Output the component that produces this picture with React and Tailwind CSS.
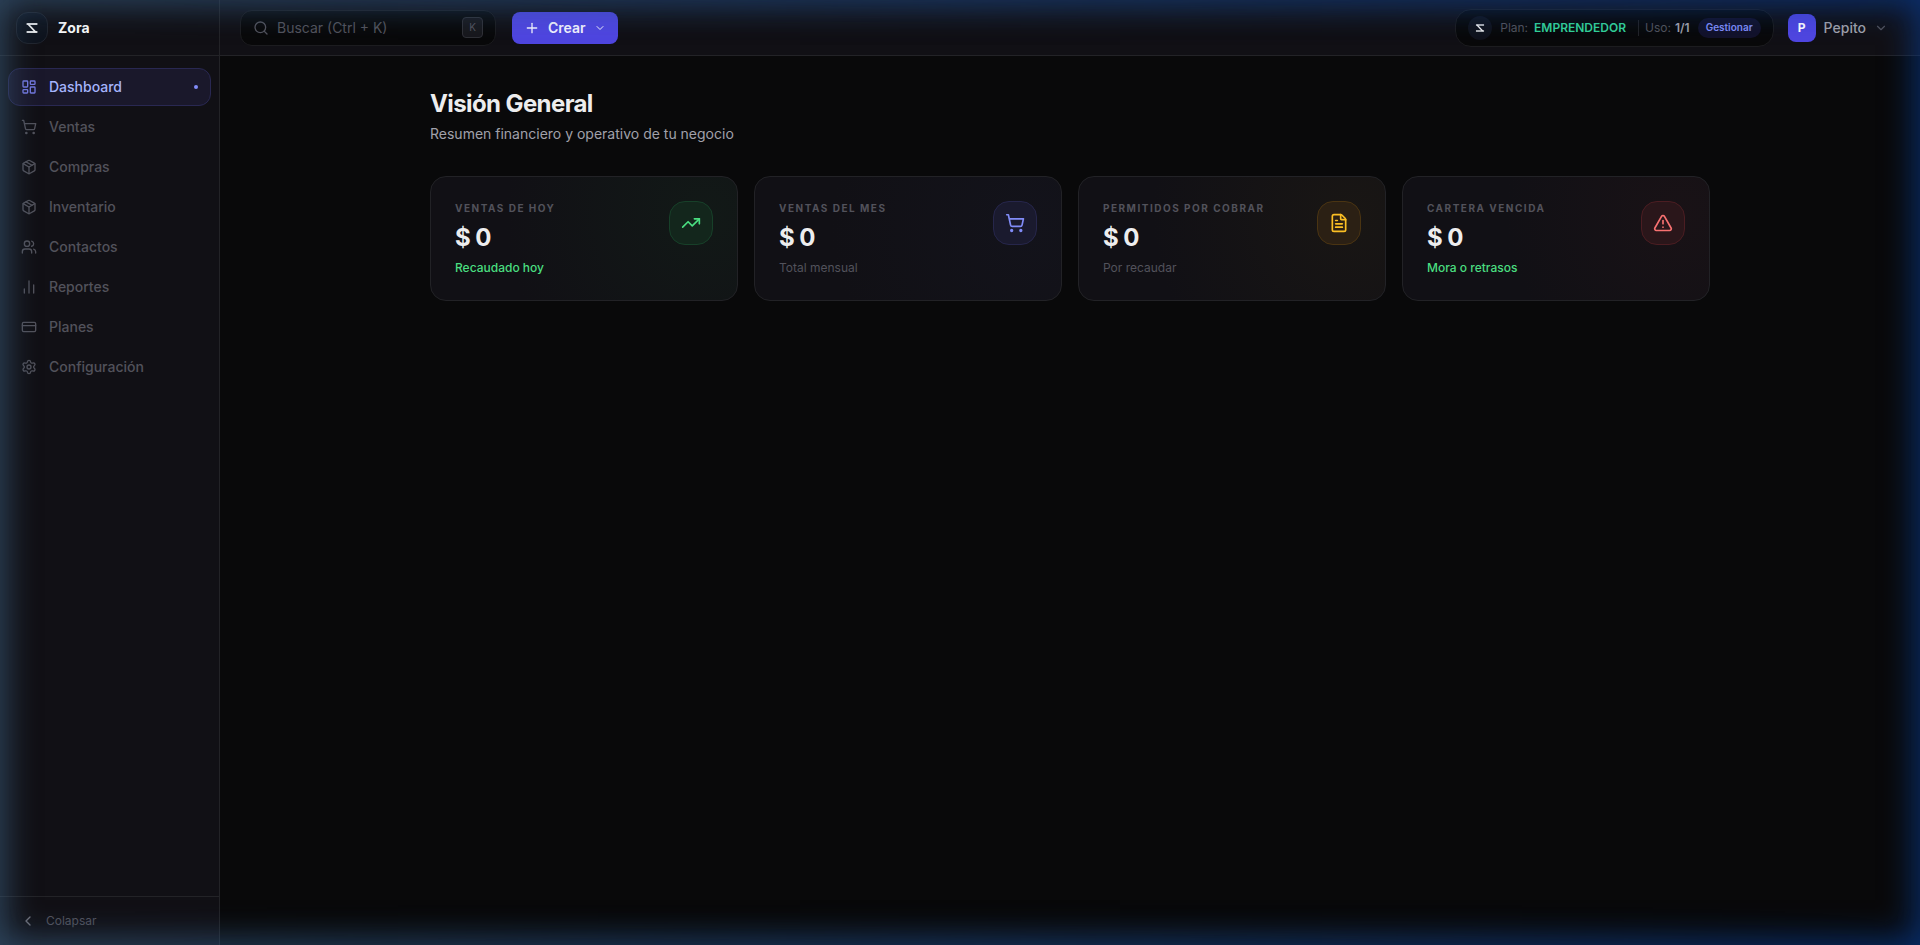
import React from "react";
import {
  LayoutDashboard, ShoppingCart, Package, Users, ChartNoAxesColumn, CreditCard, Settings,
  ChevronLeft, ChevronDown, Search, Plus, TrendingUp, FileText, TriangleAlert,
} from "lucide-react";

function Mark({ className }) {
  return (
    <svg viewBox="0 0 16 16" className={className} fill="none" stroke="#f4f4f5" strokeWidth="1.8" aria-hidden="true">
      <path d="M2.6 4H13.4" />
      <path d="M4 4L11.5 12" />
      <path d="M2.6 12H13.4" />
    </svg>
  );
}

const nav = [
  { label: "Dashboard", icon: LayoutDashboard, active: true },
  { label: "Ventas", icon: ShoppingCart },
  { label: "Compras", icon: Package },
  { label: "Inventario", icon: Package },
  { label: "Contactos", icon: Users },
  { label: "Reportes", icon: ChartNoAxesColumn },
  { label: "Planes", icon: CreditCard },
  { label: "Configuración", icon: Settings },
];

const cards = [
  {
    title: "VENTAS DE HOY", note: "Recaudado hoy", noteClass: "text-[#4ade80] font-medium", icon: TrendingUp,
    box: "bg-[#13261c] border-[#174029] text-[#4ade80]",
    glow: "bg-[radial-gradient(circle_at_90%_30%,#121917,#111015_70%)]",
  },
  {
    title: "VENTAS DEL MES", note: "Total mensual", noteClass: "text-[#52525b]", icon: ShoppingCart,
    box: "bg-[#1a1a2e] border-[#26264b] text-[#818cf8]",
    glow: "bg-[radial-gradient(circle_at_90%_40%,#13131b,#111015_70%)]",
  },
  {
    title: "PERMITIDOS POR COBRAR", note: "Por recaudar", noteClass: "text-[#52525b]", icon: FileText,
    box: "bg-[#2b2014] border-[#4a3412] text-[#fbbf24]",
    glow: "bg-[radial-gradient(circle_at_90%_30%,#191614,#111015_70%)]",
  },
  {
    title: "CARTERA VENCIDA", note: "Mora o retrasos", noteClass: "text-[#4ade80] font-medium", icon: TriangleAlert,
    box: "bg-[#2a161a] border-[#4b1d22] text-[#f87171]",
    glow: "bg-[radial-gradient(circle_at_90%_30%,#191216,#111015_60%)]",
  },
];

function Sidebar() {
  return (
    <aside className="flex w-55 shrink-0 flex-col border-r border-[#232327] bg-[#111015]">
      <div className="flex h-14 items-center gap-2.5 border-b border-[#232327] px-4">
        <span className="flex size-8 items-center justify-center rounded-xl border border-[#20242d] bg-[#0e131d]">
          <Mark className="size-4" />
        </span>
        <span className="text-sm font-bold text-[#fafafa]">Zora</span>
      </div>
      <nav className="flex flex-1 flex-col gap-0.5 px-2 pt-3">
        {nav.map(({ label, icon: Icon, active }) => (
          <a
            key={label}
            href="#"
            aria-current={active ? "page" : undefined}
            className={
              "flex h-[38px] items-center gap-3 rounded-xl border px-3 text-sm font-medium " +
              (active ? "border-[#292852] bg-[#1a182b] text-[#a5b4fc]" : "border-transparent text-[#52525b]")
            }
          >
            <Icon className={"size-4 " + (active ? "text-[#7378e0]" : "")} />
            {label}
            {active && <span className="ml-auto size-1 rounded-full bg-[#818cf8]" />}
          </a>
        ))}
      </nav>
      <div className="border-t border-[#232327] p-2">
        <button className="flex h-8 w-full items-center gap-2.5 px-3 text-xs text-[#52525b]">
          <ChevronLeft className="size-4 text-[#71717a]" />
          Colapsar
        </button>
      </div>
    </aside>
  );
}

function Header() {
  return (
    <header className="flex h-14 shrink-0 items-center border-b border-[#232327] bg-[#111015] px-5">
      <label className="flex h-9 w-64 items-center gap-2 rounded-xl border border-[#1c1c1f] bg-[#09090a] px-3">
        <Search className="size-4 text-[#52525b]" />
        <input
          aria-label="Buscar"
          placeholder="Buscar (Ctrl + K)"
          className="min-w-0 flex-1 bg-transparent text-sm text-[#d4d4d8] outline-none placeholder:text-[#52525b]"
        />
        <kbd className="flex size-[21px] items-center justify-center rounded border border-[#303036] bg-[#18181c] font-[Inter,sans-serif] text-[10px] text-[#52525b]">
          K
        </kbd>
      </label>
      <button className="ml-4 flex h-8 items-center gap-2 rounded-lg bg-[#4f46e0] px-3 text-sm font-semibold text-[#f4f4ff]">
        <Plus className="size-4" />
        Crear
        <ChevronDown className="size-3" />
      </button>
      <div className="ml-auto flex h-[38px] items-center rounded-2xl border border-[#1c1c1f] bg-[#09090a] px-3 text-xs">
        <span className="flex size-6 items-center justify-center rounded-full bg-[#10131c]">
          <Mark className="size-3" />
        </span>
        <span className="ml-2 text-[#52525b]">Plan:</span>
        <span className="ml-1.5 font-semibold text-[#34d399]">EMPRENDEDOR</span>
        <span className="mr-1.5 ml-3 h-4 w-px bg-[#232327]" />
        <span className="text-[#52525b]">Uso:</span>
        <span className="ml-1 font-semibold text-[#a1a1aa]">1/1</span>
        <button className="ml-2 h-5 rounded-full bg-[#13122a] px-2 text-[10px] font-semibold text-[#818cf8]">Gestionar</button>
      </div>
      <button className="ml-3.5 flex items-center gap-2 pr-3 text-sm font-medium text-[#a1a1aa]">
        <span className="flex size-7 items-center justify-center rounded-lg bg-[#4f46e0] text-xs font-bold text-white">P</span>
        Pepito
        <ChevronDown className="size-3.5 text-[#52525b]" />
      </button>
    </header>
  );
}

function StatCard({ title, note, noteClass, icon: Icon, box, glow }) {
  return (
    <article className={"flex items-start justify-between rounded-2xl border border-[#222226] p-6 " + glow}>
      <div>
        <h2 className="text-[10px] leading-[15px] font-bold tracking-[0.15em] text-[#52525b]">{title}</h2>
        <p className="mt-1 text-2xl leading-9 font-bold tracking-tight text-[#ededee]">$ 0</p>
        <p className={"mt-1 text-xs leading-4 " + noteClass}>{note}</p>
      </div>
      <span className={"flex size-11 items-center justify-center rounded-2xl border " + box}>
        <Icon className="size-5" />
      </span>
    </article>
  );
}

export default function App() {
  return (
    <div className="relative flex min-h-screen bg-[#09090a] font-[Inter,sans-serif]">
      <Sidebar />
      <div className="flex min-w-0 flex-1 flex-col">
        <Header />
        <main className="mx-auto w-full max-w-7xl pt-8">
          <h1 className="text-2xl leading-8 font-bold tracking-tight text-[#ededee]">Visión General</h1>
          <p className="mt-1 text-sm text-[#a1a1aa]">Resumen financiero y operativo de tu negocio</p>
          <section className="mt-8 grid grid-cols-4 gap-4">
            {cards.map((c) => (
              <StatCard key={c.title} {...c} />
            ))}
          </section>
        </main>
      </div>
      <div className="pointer-events-none absolute inset-0 [mask-image:linear-gradient(to_right,black,rgb(0_0_0/0.6)_50%,transparent)] shadow-[inset_0_0_32px_6px_#3e6488a0]" />
      <div className="pointer-events-none absolute inset-0 [mask-image:linear-gradient(to_left,black,rgb(0_0_0/0.6)_50%,transparent)] shadow-[inset_0_0_32px_6px_#0842a0a0]" />
    </div>
  );
}
